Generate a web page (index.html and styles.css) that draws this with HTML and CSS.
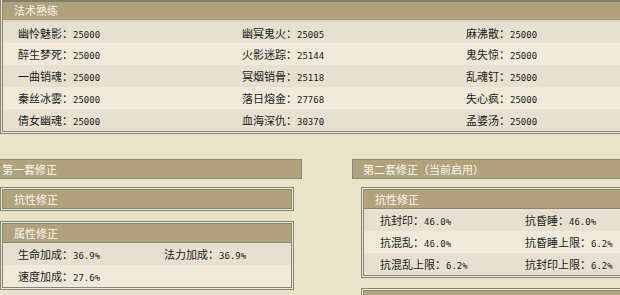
FILE: index.html
```html
<!DOCTYPE html>
<html lang="zh-CN">
<head>
<meta charset="utf-8">
<title>修正</title>
<link rel="stylesheet" href="styles.css">
</head>
<body>
<div class="page">
  <section class="top">
    <div class="top-in">
      <div class="ph">法术熟练</div>
      <table class="grid g3">
        <tr><td>幽怜魅影：<span class="n">25000</span></td><td>幽冥鬼火：<span class="n">25005</span></td><td>麻沸散：<span class="n">25000</span></td></tr>
        <tr><td>醉生梦死：<span class="n">25000</span></td><td>火影迷踪：<span class="n">25144</span></td><td>鬼失惊：<span class="n">25000</span></td></tr>
        <tr><td>一曲销魂：<span class="n">25000</span></td><td>冥烟销骨：<span class="n">25118</span></td><td>乱魂钉：<span class="n">25000</span></td></tr>
        <tr><td>秦丝冰雾：<span class="n">25000</span></td><td>落日熔金：<span class="n">27768</span></td><td>失心疯：<span class="n">25000</span></td></tr>
        <tr><td>倩女幽魂：<span class="n">25000</span></td><td>血海深仇：<span class="n">30370</span></td><td>孟婆汤：<span class="n">25000</span></td></tr>
      </table>
    </div>
  </section>

  <div class="cols">
    <div class="col col-left">
      <div class="bar">第一套修正</div>
      <div class="sub">
        <div class="si"><div class="sh">抗性修正</div></div>
      </div>
      <div class="sub sub-next">
        <div class="si">
          <div class="sh">属性修正</div>
          <table class="grid g2">
            <tr><td>生命加成：<span class="n">36.9%</span></td><td>法力加成：<span class="n">36.9%</span></td></tr>
            <tr><td>速度加成：<span class="n">27.6%</span></td><td></td></tr>
          </table>
        </div>
      </div>
    </div>
    <div class="col col-right">
      <div class="bar">第二套修正（当前启用）</div>
      <div class="sub">
        <div class="si">
          <div class="sh">抗性修正</div>
          <table class="grid g2r">
            <tr><td>抗封印：<span class="n">46.0%</span></td><td>抗昏睡：<span class="n">46.0%</span></td></tr>
            <tr><td>抗混乱：<span class="n">46.0%</span></td><td>抗昏睡上限：<span class="n">6.2%</span></td></tr>
            <tr><td>抗混乱上限：<span class="n">6.2%</span></td><td>抗封印上限：<span class="n">6.2%</span></td></tr>
          </table>
        </div>
      </div>
      <div class="sub sub-next">
        <div class="si"><div class="sh"></div></div>
      </div>
    </div>
  </div>
</div>
</body>
</html>
```

FILE: styles.css
```css
html, body {
  margin: 0;
  padding: 0;
}
body {
  width: 620px;
  height: 295px;
  overflow: hidden;
  background: #ebe2ca;
  font-family: "Noto Sans CJK SC", "Noto Sans", sans-serif;
  font-size: 11px;
  color: #1e1e1e;
}
.page {
  width: 700px;
}
.top {
  width: 660px;
  border: 1px solid #868972;
  border-top: none;
  padding: 0 1px 1px 1px;
  background: #e9e4d3;
}
.top-in {
  border: 1px solid #868972;
  border-top: none;
}
.ph {
  height: 17px;
  line-height: 17px;
  border-top: 2px solid #7f826b;
  border-bottom: 1px solid #9c9a84;
  background: #b1a27e;
  color: #faf6ec;
  padding-left: 11px;
  font-size: 11px;
}
.grid {
  border-collapse: collapse;
  border-spacing: 0;
  table-layout: fixed;
  width: 100%;
}
.top .grid {
  border-top: 2px solid #d9d3bf;
}
.grid td {
  box-sizing: border-box;
  height: 22px;
  line-height: 14px;
  padding: 0;
  vertical-align: middle;
  white-space: nowrap;
}
.grid tr:nth-child(odd) {
  background: #e7dfcf;
}
.grid tr:nth-child(even) {
  background: #f0e9da;
}
.g3 td {
  width: 224px;
  padding-left: 15px;
}
.g3 td:last-child {
  width: auto;
}
.g2 td {
  padding-left: 15px;
}
.g2 td:first-child {
  width: 146px;
}
.g2r td {
  padding-left: 16px;
}
.g2r td:first-child {
  width: 145px;
}
.n {
  font-family: "DejaVu Sans Mono", monospace;
  font-size: 9px;
  line-height: 1;
}
.cols {
  display: flex;
  gap: 50px;
  margin-top: 25px;
}
.col {
  width: 311px;
  flex: none;
}
.col-left {
  margin-left: -9px;
}
.bar {
  height: 18px;
  line-height: 18px;
  border: 1px solid #8b8c74;
  background: #b1a27e;
  color: #faf6ec;
  padding-left: 10px;
  font-size: 11px;
}
.sub {
  margin: 8px 8px 0 9px;
  border: 1px solid #868972;
  padding: 1px;
  background: #ebe6d6;
}
.sub-next {
  margin-top: 10px;
}
.si {
  border: 1px solid #868972;
}
.sh {
  height: 18px;
  line-height: 18px;
  background: #b1a27e;
  color: #faf6ec;
  padding-left: 11px;
  font-size: 11px;
}
.si .grid {
  border-top: 1px solid #868972;
}
```
